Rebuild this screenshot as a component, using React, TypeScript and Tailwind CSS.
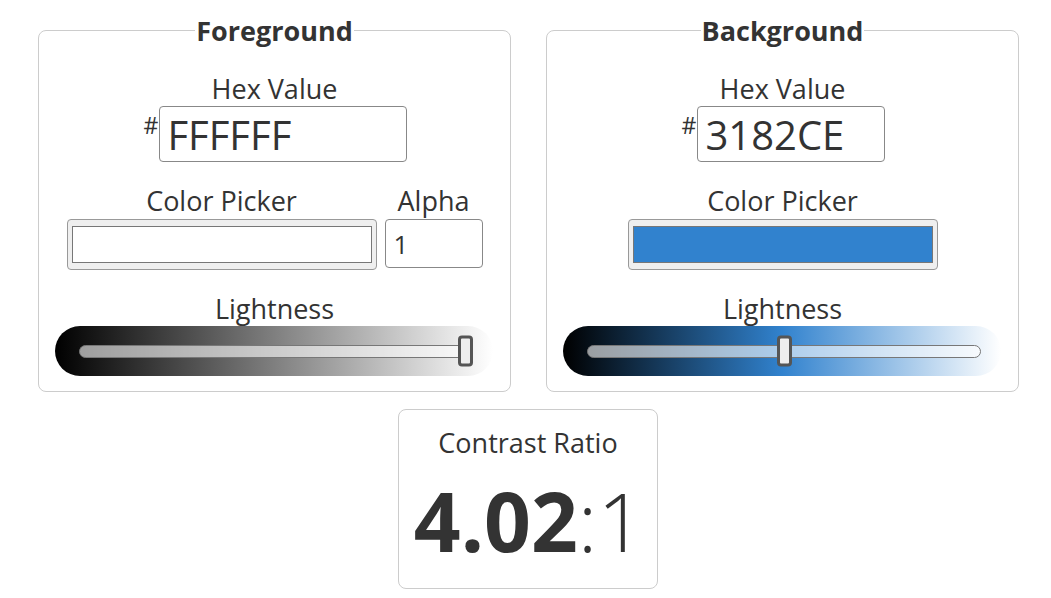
import React from "react";

type Props = {
  title: string;
  hex: string;
  hexWidth: string;
  swatch: string;
  showAlpha: boolean;
  pillClass: string;
  value: number;
};

function Lightness({ pillClass, value }: { pillClass: string; value: number }) {
  return (
    <div className={`relative flex items-center ml-[16px] w-[438px] h-[50px] rounded-full pl-[24px] pr-[20px] ${pillClass}`}>
      <div className="relative flex-1 h-[13px] rounded-full border border-[#777] bg-white/60">
        <div
          className="absolute top-1/2 -translate-y-1/2 w-[15px] h-[31px] rounded-[4px] border-[3px] border-[#555] bg-[#eee]"
          style={{ left: `calc(${value} * (100% - 15px) + ${value === 1 ? 1 : 0}px)` }}
        />
      </div>
    </div>
  );
}

function ColorPanel({ title, hex, hexWidth, swatch, showAlpha, pillClass, value }: Props) {
  return (
    <fieldset className="w-[473px] h-[380px] border border-[#cccccc] rounded-[8px] m-0 p-0 min-w-0">
      <legend className="relative top-[1px] mx-auto px-[1px] text-[27px] leading-[36px] font-bold text-[#333]">{title}</legend>
      <div className="mt-[22px] flex flex-col items-center">
        <div className="text-[27px] leading-[36px] relative top-[1px]">Hex Value</div>
        <div className="flex items-start ml-[2px]">
          <span className="text-[23px] leading-none mt-[8px] mr-[1px]">#</span>
          <input
            readOnly
            value={hex}
            className={`${hexWidth} h-[56px] border border-[#888] rounded-[4px] pl-[7px] text-[40px] leading-[54px] text-[#333] bg-white outline-none`}
          />
        </div>
      </div>
      <div className="mt-[20px] flex justify-center gap-[8px]">
        <div className="flex flex-col items-center">
          <div className="text-[27px] leading-[36px] relative top-[1px]">Color Picker</div>
          <div className="mt-[1px] w-[310px] h-[51px] rounded-[4px] border border-[#999] bg-[#efefef] px-[4px] py-[6px] flex">
            <div className="flex-1 border border-[#777]" style={{ backgroundColor: swatch }} />
          </div>
        </div>
        {showAlpha && (
          <div className="flex flex-col items-center">
            <div className="text-[27px] leading-[36px] relative top-[1px]">Alpha</div>
            <input
              readOnly
              value="1"
              className="mt-[1px] w-[98px] h-[49px] border border-[#888] rounded-[4px] pl-[8px] text-[26px] text-[#333] bg-white outline-none"
            />
          </div>
        )}
      </div>
      <div className="mt-[20px] flex flex-col">
        <div className="text-[27px] leading-[36px] text-center relative top-[1px]">Lightness</div>
        <Lightness pillClass={pillClass} value={value} />
      </div>
    </fieldset>
  );
}

export default function App() {
  return (
    <div className="w-[1051px] h-[598px] bg-white text-[#333] font-['Open_Sans',sans-serif] overflow-hidden">
      <div className="flex pl-[38px] gap-[35px] pt-[12px]">
        <ColorPanel
          title="Foreground"
          hex="FFFFFF"
          hexWidth="w-[248px]"
          swatch="#ffffff"
          showAlpha
          pillClass="bg-[linear-gradient(to_right,#000000,#7f7f7f,#ffffff)]"
          value={1}
        />
        <ColorPanel
          title="Background"
          hex="3182CE"
          hexWidth="w-[188px]"
          swatch="#3182ce"
          showAlpha={false}
          pillClass="bg-[linear-gradient(to_right,#000000,#3182ce,#ffffff)]"
          value={0.5}
        />
      </div>
      <div className="mt-[17px] ml-[398px] w-[260px] h-[180px] border border-[#cccccc] rounded-[8px] flex flex-col items-center">
        <div className="mt-[15px] text-[27px] leading-[36px]">Contrast Ratio</div>
        <div className="mt-[19px] text-[82px] leading-[80px] ml-[2px]">
          <span className="font-bold">4.02</span>
          <span className="font-light">:1</span>
        </div>
      </div>
    </div>
  );
}
